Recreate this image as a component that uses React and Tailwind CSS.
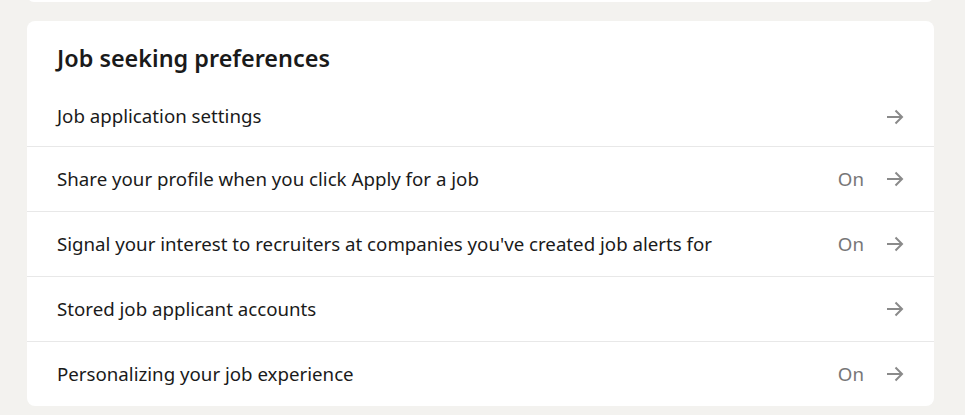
const rows = [
  { label: "Job application settings", on: false },
  { label: "Share your profile when you click Apply for a job", on: true },
  { label: "Signal your interest to recruiters at companies you've created job alerts for", on: true },
  { label: "Stored job applicant accounts", on: false },
  { label: "Personalizing your job experience", on: true },
]

function Arrow() {
  return (
    <svg width="18" height="16" viewBox="0 0 18 16" fill="none" className="text-[#8a8a8a]">
      <path d="M1 8h15M9.5 1.5 16 8l-6.5 6.5" stroke="currentColor" strokeWidth="2" />
    </svg>
  )
}

export default function App() {
  return (
    <div className="min-h-screen bg-[#f3f2ef] font-['Noto_Sans',sans-serif] overflow-hidden">
      <div className="-mt-[12px] mx-[27px] w-[907px] h-[14px] bg-white rounded-lg" />
      <div className="mt-[19px] mx-[27px] w-[907px] bg-white rounded-lg">
        <h1 className="pt-[22px] px-[30px] text-[23.4px] leading-[30px] font-semibold text-[#1a1a1a]">
          Job seeking preferences
        </h1>
        <div className="mt-[14px]">
          {rows.map((r, i) => (
            <div
              key={r.label}
              className={`flex items-center justify-between pl-[30px] pr-[30px] ${i === 0 ? "h-[59px]" : "h-[65px] border-t border-[#e8e8e8]"}`}
            >
              <span className="text-[18.7px] text-[#1a1a1a]">{r.label}</span>
              <div className="flex items-center gap-[22px]">
                {r.on && <span className="text-[18.7px] text-[#777]">On</span>}
                <Arrow />
              </div>
            </div>
          ))}
        </div>
      </div>
    </div>
  )
}
